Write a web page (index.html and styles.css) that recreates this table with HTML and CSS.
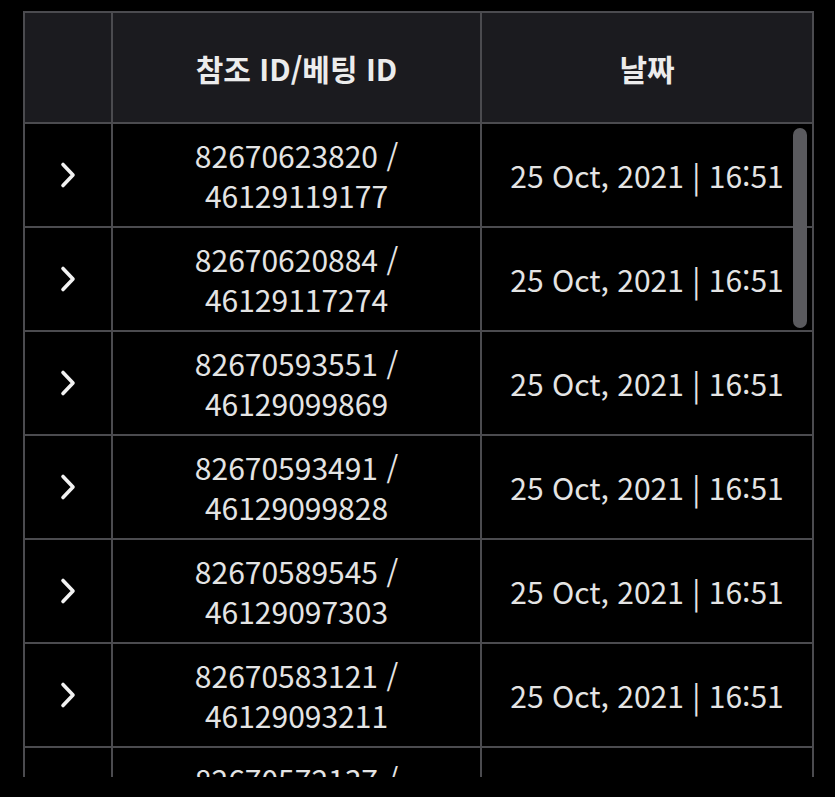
FILE: index.html
```html
<!DOCTYPE html>
<html lang="ko">
<head>
<meta charset="utf-8">
<link rel="stylesheet" href="styles.css">
</head>
<body>
<div class="wrap">
  <div class="scroller">
    <table class="bets">
      <colgroup><col class="c1"><col class="c2"><col class="c3"></colgroup>
      <thead>
        <tr><th></th><th>참조 ID/베팅 ID</th><th>날짜</th></tr>
      </thead>
      <tbody>
        <tr><td class="chev"><svg viewBox="0 0 20 30" width="20" height="30"><path d="M5 4.5 L15 15 L5 25.5" fill="none" stroke="#f2f2f2" stroke-width="3.6" stroke-linecap="round" stroke-linejoin="round"/></svg></td><td>82670623820 /<br>46129119177</td><td>25 Oct, 2021 | 16:51</td></tr>
        <tr><td class="chev"><svg viewBox="0 0 20 30" width="20" height="30"><path d="M5 4.5 L15 15 L5 25.5" fill="none" stroke="#f2f2f2" stroke-width="3.6" stroke-linecap="round" stroke-linejoin="round"/></svg></td><td>82670620884 /<br>46129117274</td><td>25 Oct, 2021 | 16:51</td></tr>
        <tr><td class="chev"><svg viewBox="0 0 20 30" width="20" height="30"><path d="M5 4.5 L15 15 L5 25.5" fill="none" stroke="#f2f2f2" stroke-width="3.6" stroke-linecap="round" stroke-linejoin="round"/></svg></td><td>82670593551 /<br>46129099869</td><td>25 Oct, 2021 | 16:51</td></tr>
        <tr><td class="chev"><svg viewBox="0 0 20 30" width="20" height="30"><path d="M5 4.5 L15 15 L5 25.5" fill="none" stroke="#f2f2f2" stroke-width="3.6" stroke-linecap="round" stroke-linejoin="round"/></svg></td><td>82670593491 /<br>46129099828</td><td>25 Oct, 2021 | 16:51</td></tr>
        <tr><td class="chev"><svg viewBox="0 0 20 30" width="20" height="30"><path d="M5 4.5 L15 15 L5 25.5" fill="none" stroke="#f2f2f2" stroke-width="3.6" stroke-linecap="round" stroke-linejoin="round"/></svg></td><td>82670589545 /<br>46129097303</td><td>25 Oct, 2021 | 16:51</td></tr>
        <tr><td class="chev"><svg viewBox="0 0 20 30" width="20" height="30"><path d="M5 4.5 L15 15 L5 25.5" fill="none" stroke="#f2f2f2" stroke-width="3.6" stroke-linecap="round" stroke-linejoin="round"/></svg></td><td>82670583121 /<br>46129093211</td><td>25 Oct, 2021 | 16:51</td></tr>
        <tr><td class="chev"><svg viewBox="0 0 20 30" width="20" height="30"><path d="M5 4.5 L15 15 L5 25.5" fill="none" stroke="#f2f2f2" stroke-width="3.6" stroke-linecap="round" stroke-linejoin="round"/></svg></td><td>82670572137 /<br>46129086400</td><td>25 Oct, 2021 | 16:51</td></tr>
      </tbody>
    </table>
  </div>
  <div class="scrollbar"></div>
</div>
</body>
</html>
```

FILE: styles.css
```css
html, body {
  margin: 0;
  padding: 0;
  background: #000;
}
body {
  font-family: "Noto Sans CJK KR", "Noto Sans", sans-serif;
  color: #e4e4e4;
}
.wrap {
  position: relative;
  margin: 11px 0 0 23px;
  width: 792px;
  height: 766px;
}
.scroller {
  width: 792px;
  height: 766px;
  overflow: hidden;
}
.bets {
  border-collapse: collapse;
  width: 789px;
  table-layout: fixed;
}
.c1 { width: 88px; }
.c2 { width: 369px; }
.c3 { width: 332px; }
.bets th, .bets td {
  border: 2px solid #4b4b4f;
  text-align: center;
  vertical-align: middle;
  padding: 0;
}
.bets th {
  background: #1b1b1f;
  height: 109px;
  font-size: 30px;
  font-weight: 700;
  color: #ececec;
}
.bets td {
  height: 102px;
  font-size: 30px;
  line-height: 40px;
  font-weight: 400;
}
.chev svg {
  display: block;
  margin: 0 auto;
}
.scrollbar {
  position: absolute;
  left: 770px;
  top: 117px;
  width: 14px;
  height: 200px;
  border-radius: 7px;
  background: #5a5a5e;
}
```
